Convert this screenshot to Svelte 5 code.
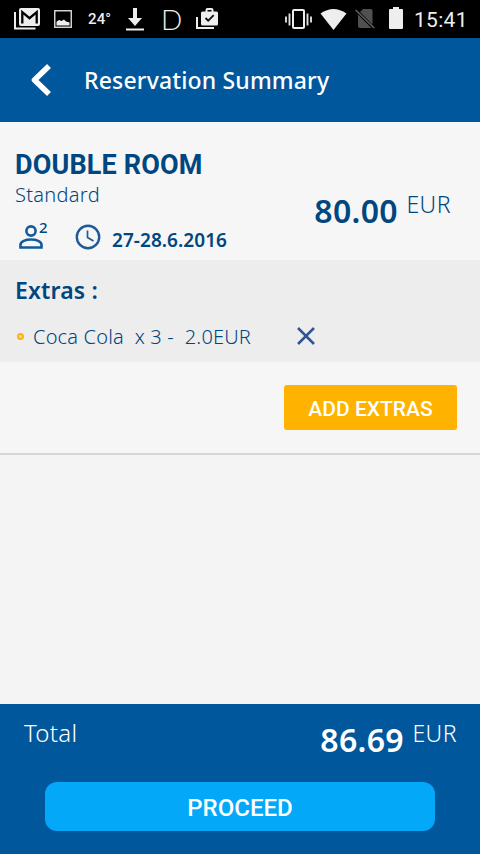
<script>
	let room = {
		name: "DOUBLE ROOM",
		type: "Standard",
		guests: 2,
		dates: "27-28.6.2016",
		price: "80.00",
	};
	let extras = [{ name: "Coca Cola", count: 3, price: "2.0" }];
	let currency = "EUR";
	let total = "86.69";

	function removeExtra(index) {
		extras = extras.filter((_, i) => i !== index);
	}
</script>

<div class="screen">
	<div class="status">
		<svg class="mail" width="26" height="22" viewBox="0 0 26 22">
			<path d="M1 4v16.500h20.500" fill="none" stroke="#eee" stroke-width="2" />
			<rect x="5" y="0" width="21" height="18" rx="2" fill="#eee" />
			<path d="M8.300 15.500V4.200l7.200 6 7.200-6v11.300" fill="none" stroke="#000" stroke-width="2.300" />
		</svg>
		<svg class="photo" width="18" height="18" viewBox="0 0 18 18">
			<rect x=".75" y=".75" width="16.500" height="16.500" fill="none" stroke="#ddd" stroke-width="1.400" />
			<path d="M2.500 15.500v-3.800l2.500-1.800 2.500 1.200 2.500-1.600 2 2 3.500 1v3z" fill="#eee" />
		</svg>
		<span class="temp">24°</span>
		<svg class="download" width="18" height="23" viewBox="0 0 18 23">
			<path d="M7 0h4v10h5l-7 8-7-8h5z" fill="#eee" />
			<path d="M0 21.500h18" stroke="#eee" stroke-width="2" />
		</svg>
		<span class="letter">D</span>
		<svg class="bag" width="22" height="22" viewBox="0 0 22 22">
			<path d="M1 9v11h17" fill="none" stroke="#eee" stroke-width="2" />
			<path d="M10.500 4V2q0-1 1-1h4q1 0 1 1v2" fill="none" stroke="#eee" stroke-width="2" />
			<rect x="5" y="3.500" width="17" height="14" rx="1.500" fill="#eee" />
			<path d="M9.500 10l2.700 2.700 5.500-5.500" fill="none" stroke="#111" stroke-width="1.800" />
		</svg>
		<span class="spacer"></span>
		<svg class="vibrate" width="27" height="22" viewBox="0 0 27 22">
			<rect x="8" y="2" width="11" height="18" rx="1" fill="none" stroke="#eee" stroke-width="2" />
			<path d="M4.500 5.500v12M1 8.500v6M22.500 5.500v12M26 8.500v6" stroke="#ddd" stroke-width="1.900" />
		</svg>
		<svg class="wifi" width="27" height="21" viewBox="0 0 27 21">
			<path d="M.5 4.500Q13.500-4.500 26.500 4.500L13.500 21z" fill="#eee" />
		</svg>
		<svg class="sim" width="20" height="20" viewBox="0 0 20 20">
			<path d="M8 0h8q1.500 0 1.500 1.500v14L5 3zM3 5.500l13.500 13.500H5q-2 0-2-2z" fill="#505050" />
			<path d="M.7 1l18.500 18" stroke="#606060" stroke-width="1.600" />
		</svg>
		<svg class="battery" width="14" height="22" viewBox="0 0 14 22">
			<path d="M4 0h6v2h3q1 0 1 1v18q0 1-1 1H1q-1 0-1-1V3q0-1 1-1h3z" fill="#eee" />
		</svg>
		<span class="clock">15:41</span>
	</div>

	<header>
		<svg width="23" height="34" viewBox="0 0 23 34">
			<path d="M20 3L5.500 17 20 31" fill="none" stroke="#fff" stroke-width="5.600" stroke-linejoin="round" />
		</svg>
		<h1>Reservation Summary</h1>
	</header>

	<section class="room">
		<div class="info">
			<h2>{room.name}</h2>
			<div class="type">{room.type}</div>
			<div class="details">
				<svg class="person" width="24" height="24" viewBox="0 0 24 24">
					<circle cx="12" cy="6" r="4.600" fill="none" stroke="#135a9c" stroke-width="2.600" />
					<path d="M1.500 22.500v-2.700c0-7 21-7 21 0v2.700z" fill="none" stroke="#135a9c" stroke-width="2.600" />
				</svg>
				<span class="guests">{room.guests}</span>
				<svg class="time" width="26" height="26" viewBox="0 0 26 26">
					<circle cx="13" cy="13" r="11.200" fill="none" stroke="#1d5b98" stroke-width="2.400" />
					<path d="M12.500 6.500v7l6 3.500" fill="none" stroke="#1d5b98" stroke-width="1.700" />
				</svg>
				<span class="dates">{room.dates}</span>
			</div>
		</div>
		<div class="price">
			<span class="amount">{room.price}</span>
			<span class="currency">{currency}</span>
		</div>
	</section>

	<section class="extras">
		<h3>Extras :</h3>
		{#each extras as extra, i}
			<div class="extra">
				<span class="bullet"></span>
				<span class="item">{extra.name}&nbsp; x {extra.count} -&nbsp; {extra.price}{currency}</span>
				<button class="remove" aria-label="Remove" on:click={() => { removeExtra(i); }}>
					<svg width="18" height="18" viewBox="0 0 18 18">
						<path d="M1 1l16 16M17 1L1 17" stroke="#2f5597" stroke-width="2.500" />
					</svg>
				</button>
			</div>
		{/each}
	</section>

	<div class="actions">
		<button class="add">ADD EXTRAS</button>
	</div>

	<footer>
		<div class="total">
			<span class="label">Total</span>
			<div class="price">
				<span class="amount">{total}</span>
				<span class="currency">{currency}</span>
			</div>
		</div>
		<button class="proceed">PROCEED</button>
	</footer>
</div>

<style>
	:global(body) {
		margin: 0;
	}
	.screen {
		display: flex;
		flex-direction: column;
		width: 480px;
		height: 854px;
		overflow: hidden;
		background: #f4f4f4;
		color: #004680;
		font-family: "Noto Sans", "Open Sans", sans-serif;
		white-space: nowrap;
	}
	h1, h2, h3 {
		margin: 0;
	}
	svg {
		display: block;
		flex: none;
	}
	button {
		border: 0;
		padding: 0;
		cursor: pointer;
	}
	.status {
		display: flex;
		align-items: center;
		height: 38px;
		box-sizing: border-box;
		padding: 0 12px 0 14px;
		background: #000;
		color: #eee;
		font-family: Roboto, sans-serif;
	}
	.photo {
		margin-left: 14px;
	}
	.temp {
		width: 24px;
		margin-left: 16px;
		font-size: 15px;
		font-weight: 500;
		letter-spacing: 0.1px;
	}
	.download {
		margin-left: 14px;
	}
	.letter {
		width: 18px;
		margin-left: 17px;
		font-family: Lato, sans-serif;
		font-size: 28px;
		font-weight: 300;
		line-height: 37px;
		color: #eee;
	}
	.bag {
		margin-left: 17px;
	}
	.spacer {
		flex: 1;
	}
	.wifi {
		margin-left: 8px;
	}
	.sim {
		margin-left: 8px;
	}
	.battery {
		margin-left: 14px;
		margin-bottom: 2px;
	}
	.clock {
		width: 54px;
		margin-left: 11px;
		padding-top: 2px;
		font-size: 21px;
		line-height: 36px;
		letter-spacing: 0.3px;
	}
	header {
		display: flex;
		align-items: center;
		gap: 32px;
		height: 84px;
		padding-left: 29px;
		background: #00579c;
		color: #fff;
	}
	h1 {
		font-size: 23px;
		font-weight: 500;
		line-height: 34px;
		letter-spacing: 0.16px;
	}
	.room {
		display: flex;
		justify-content: space-between;
		height: 138px;
		box-sizing: border-box;
		padding: 27px 29px 0 15px;
		background: #f6f6f6;
	}
	h2 {
		font-family: Roboto, sans-serif;
		font-size: 27px;
		font-weight: 700;
		line-height: 32px;
		letter-spacing: 0.15px;
	}
	.type {
		font-size: 20px;
		font-weight: 300;
		line-height: 28px;
		letter-spacing: 0.3px;
	}
	.details {
		display: flex;
		margin-top: 15px;
	}
	.person {
		margin: 1px 0 0 4px;
	}
	.guests {
		width: 9px;
		margin-left: -4px;
		font-size: 15px;
		font-weight: 500;
		line-height: 7px;
	}
	.time {
		margin-left: 27px;
	}
	.dates {
		margin-left: 11px;
		font-size: 19px;
		font-weight: 600;
		line-height: 33px;
		letter-spacing: 0.05px;
	}
	.price {
		display: flex;
	}
	.amount {
		font-size: 32px;
		font-weight: 600;
		line-height: 41px;
		letter-spacing: 0.3px;
	}
	.currency {
		margin-left: 8.5px;
		font-size: 23px;
		font-weight: 300;
		line-height: 28px;
		letter-spacing: 0.5px;
	}
	.room .price {
		padding-top: 41px;
	}
	.extras {
		height: 102px;
		box-sizing: border-box;
		padding: 14px 15px 0;
		background: #ededed;
	}
	h3 {
		font-size: 23px;
		font-weight: 600;
		line-height: 32px;
		letter-spacing: 0.15px;
	}
	.extra {
		display: flex;
		align-items: center;
		height: 30px;
		margin-top: 15px;
	}
	.bullet {
		width: 3px;
		height: 3px;
		margin-left: 2px;
		border: 2px solid #fbb31c;
		border-radius: 50%;
		background: #f8d88c;
	}
	.item {
		width: 264px;
		margin-left: 9px;
		font-size: 20px;
		font-weight: 300;
		letter-spacing: 0.18px;
	}
	.remove {
		background: none;
	}
	.actions {
		display: flex;
		justify-content: flex-end;
		height: 93px;
		box-sizing: border-box;
		padding: 23px 23px 0;
		border-bottom: 2px solid #d6d6d6;
		background: #f6f6f6;
	}
	.add {
		width: 173px;
		height: 45px;
		padding-top: 3px;
		border-radius: 3px;
		background: #ffb300;
		color: #fff;
		font-family: Roboto, sans-serif;
		font-size: 21px;
		font-weight: 500;
	}
	footer {
		height: 150px;
		box-sizing: border-box;
		margin-top: auto;
		padding: 15px 23px 0 24px;
		background: #00579c;
		color: #fff;
	}
	.total {
		display: flex;
		justify-content: space-between;
		height: 63px;
	}
	.label {
		font-size: 24px;
		font-weight: 300;
		line-height: 28px;
		letter-spacing: 0.3px;
	}
	.proceed {
		display: block;
		width: 390px;
		height: 49px;
		margin: 0 auto 0 21px;
		padding-top: 3px;
		border-radius: 12px;
		background: #03a9f8;
		color: #fff;
		font-family: Roboto, sans-serif;
		font-size: 24px;
		font-weight: 500;
	}
</style>
